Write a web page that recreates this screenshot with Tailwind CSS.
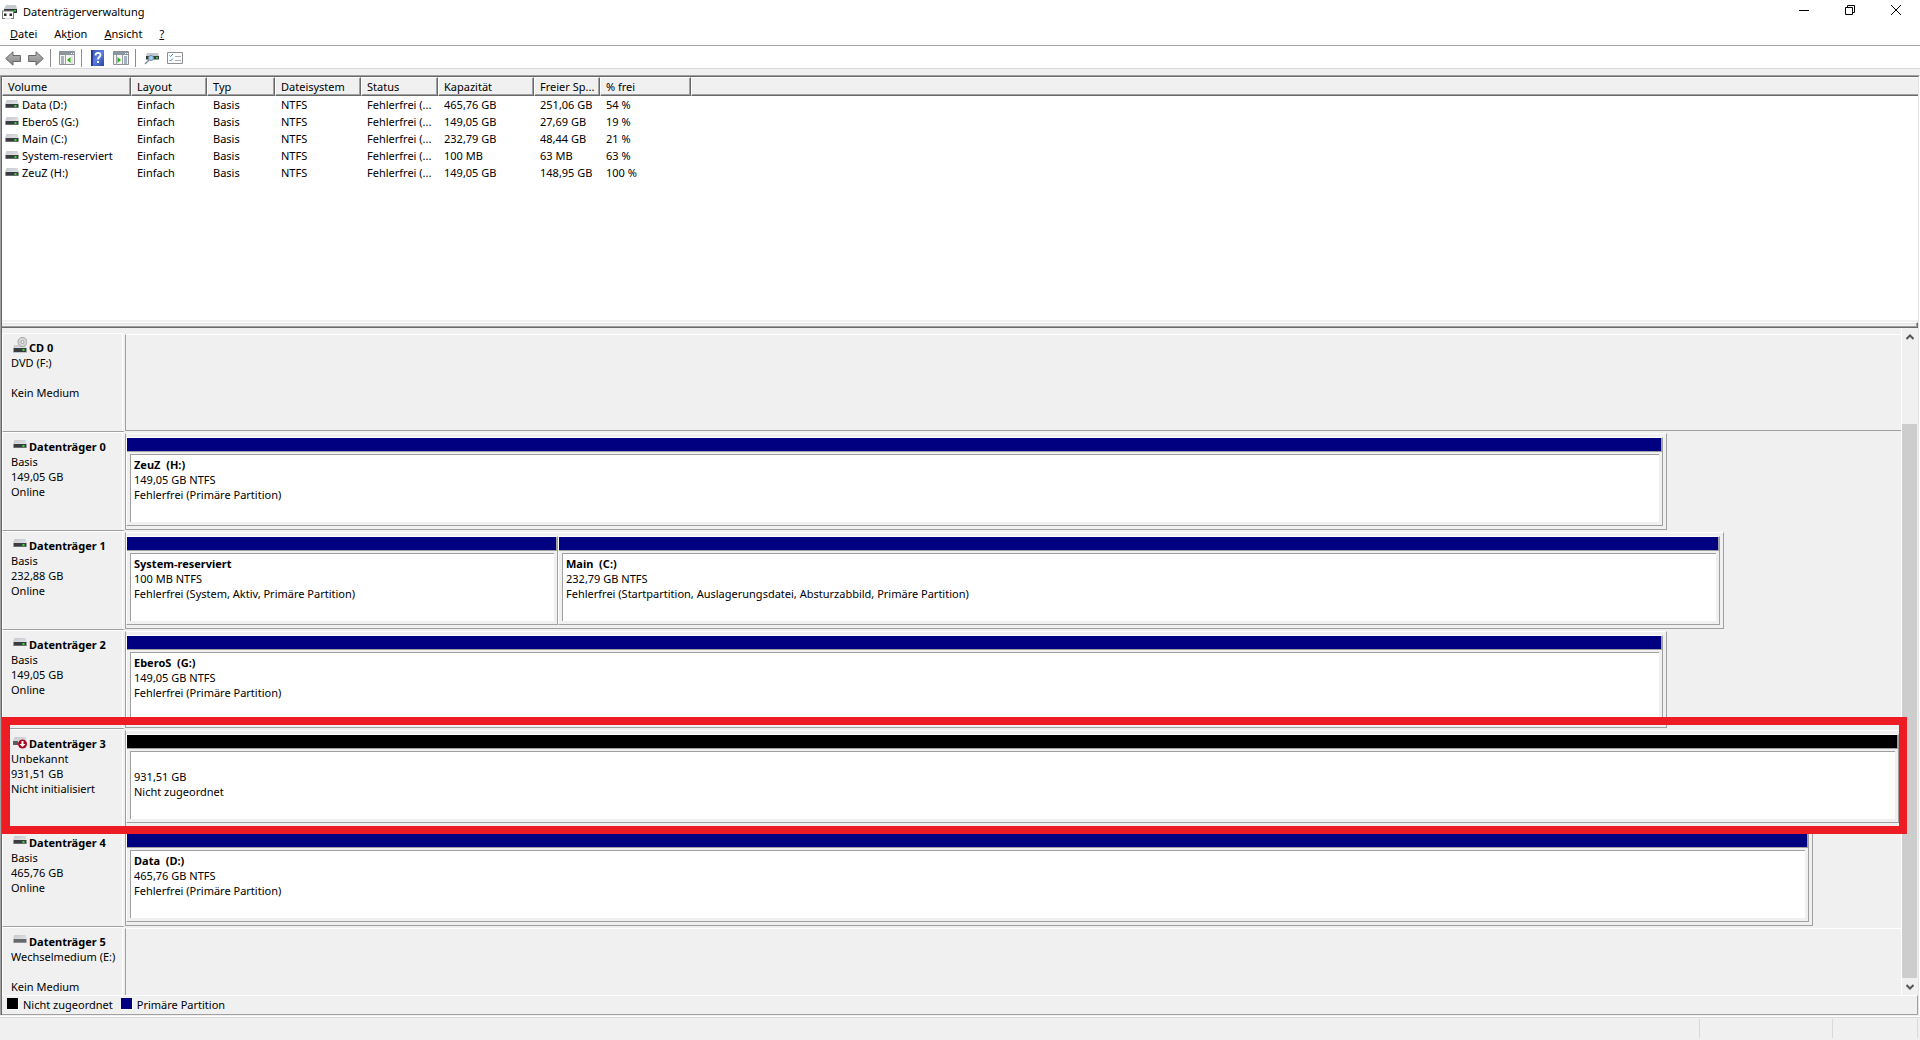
<!DOCTYPE html>
<html lang="de">
<head>
<meta charset="utf-8">
<title>Datenträgerverwaltung</title>
<script src="https://cdn.jsdelivr.net/npm/@tailwindcss/browser@4"></script>
</head>
<body class="flex h-screen flex-col overflow-hidden bg-[#f0f0f0] font-['Noto_Sans','Open_Sans',sans-serif] text-[11px] leading-[15px] text-black">

<svg class="absolute size-0" aria-hidden="true">
  <linearGradient id="lid" x1="0" y1="0" x2="1" y2="1"><stop offset="0" stop-color="#c3c6cb"/><stop offset="1" stop-color="#e2e4e7"/></linearGradient>
  <linearGradient id="arrow" x1="0" y1="0" x2="0" y2="1"><stop offset="0" stop-color="#b9b9b9"/><stop offset="1" stop-color="#858585"/></linearGradient>
  <linearGradient id="help" x1="0" y1="0" x2="1" y2="1"><stop offset="0" stop-color="#3555b5"/><stop offset=".5" stop-color="#5b7ee0"/><stop offset="1" stop-color="#2743a0"/></linearGradient>
  <symbol id="disk" viewBox="0 0 14 8"><path d="M1.500 0h11l1.500 4H0z" fill="url(#lid)"/><path d="M0 4h14v4H0z" fill="#9a9da0"/><path d="M1 4h12v3.500H1z" fill="#3a3d40"/><path d="M9.500 5h2v2h-2z" fill="#2ee02e"/></symbol>
  <symbol id="removable" viewBox="0 0 14 8"><path d="M1.500 0h11l1.500 4H0z" fill="url(#lid)"/><path d="M0 4h14v4H0z" fill="#b0b2b4"/><path d="M1 4h12v3.500H1z" fill="#66686b"/></symbol>
  <symbol id="cd" viewBox="0 0 14 16"><path d="M1.500 8h11l1.500 3H0z" fill="url(#lid)"/><path d="M0 11h14v4.500H0z" fill="#9a9da0"/><path d="M1 11h12v4H1z" fill="#3a3d40"/><path d="M9.500 12h2v2h-2z" fill="#2ee02e"/><circle cx="9.500" cy="5" r="4.500" fill="#d8d8d8" stroke="#a2a2a2"/><circle cx="9.500" cy="5" r="1.500" fill="#fff" stroke="#9a9a9a"/></symbol>
  <symbol id="offline" viewBox="0 0 14 13"><path d="M1.500 1h11l1.500 4H0z" fill="url(#lid)"/><path d="M0 5h5v4H0z" fill="#5a5d60"/><circle cx="9.500" cy="8" r="4.500" fill="#a8081c"/><path d="M8.500 5h2v3h2l-3 3-3-3h2z" fill="#fff"/></symbol>
</svg>

<header class="shrink-0 bg-white">
  <div class="flex h-[23px] items-start justify-between">
    <h1 class="flex h-[23px] items-center gap-1.5 pl-0.5">
      <svg width="15" height="14" viewBox="0 0 15 14" aria-hidden="true"><path d="M4 0h10l1 4H2z" fill="#c5c8cc"/><path d="M2 4h13v4H2z" fill="#303336"/><path d="M12 5h2v1.500h-2z" fill="#2ee02e"/><path d="M0 5.500h12V14H0z" fill="#77797c"/><path d="M1 6.500h10V13H1z" fill="#fff"/><path d="M2 8.500h2.500V11H2zM7.500 8.500H10V11H7.500z" fill="#2c2c2c"/><path d="M3 13h6v1H3z" fill="#ddd"/></svg>
      Datenträgerverwaltung
    </h1>
    <div class="flex pr-px">
      <button aria-label="Minimieren" class="flex h-5 w-[46px] items-center justify-center"><svg width="10" height="10" viewBox="0 0 10 10"><path d="M0 5h10v1H0z"/></svg></button>
      <button aria-label="Verkleinern" class="flex h-5 w-[46px] items-center justify-center"><svg width="10" height="10" viewBox="0 0 10 10" fill="none" stroke="#000"><path d="M.5 2.500h7v7h-7zM2.500 2.500v-2h7v7h-2"/></svg></button>
      <button aria-label="Schließen" class="flex h-5 w-[46px] items-center justify-center"><svg width="10" height="10" viewBox="0 0 10 10" stroke="#000"><path d="M0 0l10 10M10 0L0 10"/></svg></button>
    </div>
  </div>
  <nav aria-label="Menü" class="flex h-[23px] items-center gap-[17px] border-b border-[#a5a6ad] pb-px pl-2.5">
    <button><u>D</u>atei</button>
    <button>Ak<u>t</u>ion</button>
    <button><u>A</u>nsicht</button>
    <button><u>?</u></button>
  </nav>
  <div role="toolbar" class="flex h-[23px] items-center border-b border-[#d9d9d9] pt-0.5 pl-[5px]">
    <button aria-label="Zurück"><svg width="16" height="15" viewBox="0 0 16 15"><path d="M.7 7.500L8 .8v3.700h7.400v6H8v3.700z" fill="url(#arrow)" stroke="#666"/></svg></button>
    <button aria-label="Vorwärts" class="ml-[7px]"><svg width="16" height="15" viewBox="0 0 16 15"><path d="M15.300 7.500L8 .8v3.700H.6v6H8v3.700z" fill="url(#arrow)" stroke="#666"/></svg></button>
    <span class="ml-1.5 h-[18px] w-px bg-[#8d8d8d]"></span>
    <button aria-label="Konsolenstruktur" class="ml-2"><svg width="16" height="14" viewBox="0 0 16 14"><path d="M.5.5h15v13H.5z" fill="#f4f4f2" stroke="#8c9096"/><path d="M1 1h14v3H1z" fill="#8c96a0"/><path d="M12 2h1v1h-1zM14 2h1v1h-1z" fill="#fff"/><path d="M2 6h3M2 8h3M2 10h3M2 12h3" stroke="#56708c"/><path d="M6.500 4v10" stroke="#9aa0a6"/><path d="M8 9l3.500-3v6z" fill="#2fae1e"/><path d="M13 5v8" stroke="#d0d0d0"/></svg></button>
    <span class="ml-1.5 h-[18px] w-px bg-[#8d8d8d]"></span>
    <button aria-label="Hilfe" class="ml-[9px]"><svg width="13" height="16" viewBox="0 0 13 16"><path d="M0 0h13v16H0z" fill="url(#help)"/><path d="M0 0h2v16H0z" fill="#233c93"/><path d="M4.500 5.500c0-3.500 5-3.500 5-.5 0 2-2.500 2-2.500 4.500" fill="none" stroke="#fff" stroke-width="1.800"/><path d="M6 11h2v2H6z" fill="#fff"/></svg></button>
    <button aria-label="Aktionsbereich" class="ml-[9px]"><svg width="16" height="14" viewBox="0 0 16 14"><path d="M.5.5h15v13H.5z" fill="#f4f4f2" stroke="#8c9096"/><path d="M1 1h14v3H1z" fill="#8c96a0"/><path d="M12 2h1v1h-1zM14 2h1v1h-1z" fill="#fff"/><path d="M11 6h3M11 8h3M11 10h3M11 12h3" stroke="#56708c"/><path d="M9.500 4v10M3.500 4v10" stroke="#9aa0a6"/><path d="M8 9L4.500 6v6z" fill="#2fae1e"/></svg></button>
    <span class="ml-1.5 h-[18px] w-px bg-[#8d8d8d]"></span>
    <button aria-label="Datenträger neu einlesen" class="ml-2"><svg width="15" height="14" viewBox="0 0 15 14"><path d="M3 2h11l1 3H2z" fill="#c5c8cc"/><path d="M2 5h13v3.500H2z" fill="#3a3d40"/><path d="M12 6h2v1.500h-2z" fill="#2ee02e"/><path d="M5 9l-4 4" stroke="#7a8a9a" stroke-width="1.500"/><circle cx="7" cy="7" r="2.500" fill="#a9cdea" stroke="#6a8fb0"/></svg></button>
    <button aria-label="Eigenschaften" class="ml-2"><svg width="16" height="12" viewBox="0 0 16 12"><path d="M.5.5h15v11H.5z" fill="#fff" stroke="#8c9096"/><path d="M2.500 3.500l1 1 2.500-2.500M2.500 8l1 1L6 6.500" fill="none" stroke="#2a8ad8"/><path d="M8 4.500h6M8 8.500h6" stroke="#a8acb0"/></svg></button>
  </div>
</header>

<main class="mt-1.5 flex min-h-0 flex-1 flex-col border-t border-r border-l border-t-[#a0a0a0] border-r-white border-l-[#a0a0a0]">
 <div class="flex min-h-0 flex-1 flex-col border-t border-r border-l border-t-[#696969] border-r-[#e3e3e3] border-l-[#696969]">

  <section aria-label="Volumes" class="h-[243px] shrink-0 overflow-hidden bg-white">
    <table class="w-full table-fixed border-collapse text-left whitespace-nowrap">
      <colgroup><col class="w-[129px]"><col class="w-[76px]"><col class="w-[68px]"><col class="w-[86px]"><col class="w-[77px]"><col class="w-[96px]"><col class="w-[66px]"><col class="w-[91px]"><col></colgroup>
      <thead>
        <tr class="h-[19px]">
          <th class="p-0 font-normal"><div class="h-[19px] border-t border-r border-b border-l border-t-white border-r-[#696969] border-b-[#696969] border-l-white bg-[#f0f0f0] pt-px pl-[5px] shadow-[inset_-1px_-1px_0_#a0a0a0]">Volume</div></th>
          <th class="p-0 font-normal"><div class="h-[19px] border-t border-r border-b border-l border-t-white border-r-[#696969] border-b-[#696969] border-l-white bg-[#f0f0f0] pt-px pl-[5px] shadow-[inset_-1px_-1px_0_#a0a0a0]">Layout</div></th>
          <th class="p-0 font-normal"><div class="h-[19px] border-t border-r border-b border-l border-t-white border-r-[#696969] border-b-[#696969] border-l-white bg-[#f0f0f0] pt-px pl-[5px] shadow-[inset_-1px_-1px_0_#a0a0a0]">Typ</div></th>
          <th class="p-0 font-normal"><div class="h-[19px] border-t border-r border-b border-l border-t-white border-r-[#696969] border-b-[#696969] border-l-white bg-[#f0f0f0] pt-px pl-[5px] shadow-[inset_-1px_-1px_0_#a0a0a0]">Dateisystem</div></th>
          <th class="p-0 font-normal"><div class="h-[19px] border-t border-r border-b border-l border-t-white border-r-[#696969] border-b-[#696969] border-l-white bg-[#f0f0f0] pt-px pl-[5px] shadow-[inset_-1px_-1px_0_#a0a0a0]">Status</div></th>
          <th class="p-0 font-normal"><div class="h-[19px] border-t border-r border-b border-l border-t-white border-r-[#696969] border-b-[#696969] border-l-white bg-[#f0f0f0] pt-px pl-[5px] shadow-[inset_-1px_-1px_0_#a0a0a0]">Kapazität</div></th>
          <th class="p-0 font-normal"><div class="h-[19px] border-t border-r border-b border-l border-t-white border-r-[#696969] border-b-[#696969] border-l-white bg-[#f0f0f0] pt-px pl-[5px] shadow-[inset_-1px_-1px_0_#a0a0a0]">Freier Sp...</div></th>
          <th class="p-0 font-normal"><div class="h-[19px] border-t border-r border-b border-l border-t-white border-r-[#696969] border-b-[#696969] border-l-white bg-[#f0f0f0] pt-px pl-[5px] shadow-[inset_-1px_-1px_0_#a0a0a0]">% frei</div></th>
          <td class="p-0"><div class="h-[19px] border-t border-b border-l border-t-white border-b-[#696969] border-l-white bg-[#f0f0f0] shadow-[inset_0_-1px_0_#a0a0a0]"></div></td>
        </tr>
      </thead>
      <tbody>
        <tr class="h-[17px]"><td class="p-0"><div class="flex items-center gap-[3px] pl-[3px]"><svg class="-mt-0.5 h-2 w-3.5"><use href="#disk"/></svg>Data (D:)</div></td><td class="py-0 pl-1.5">Einfach</td><td class="py-0 pl-1.5">Basis</td><td class="py-0 pl-1.5">NTFS</td><td class="py-0 pl-1.5">Fehlerfrei (...</td><td class="py-0 pl-1.5">465,76 GB</td><td class="py-0 pl-1.5">251,06 GB</td><td class="py-0 pl-1.5">54 %</td><td></td></tr>
        <tr class="h-[17px]"><td class="p-0"><div class="flex items-center gap-[3px] pl-[3px]"><svg class="-mt-0.5 h-2 w-3.5"><use href="#disk"/></svg>EberoS (G:)</div></td><td class="py-0 pl-1.5">Einfach</td><td class="py-0 pl-1.5">Basis</td><td class="py-0 pl-1.5">NTFS</td><td class="py-0 pl-1.5">Fehlerfrei (...</td><td class="py-0 pl-1.5">149,05 GB</td><td class="py-0 pl-1.5">27,69 GB</td><td class="py-0 pl-1.5">19 %</td><td></td></tr>
        <tr class="h-[17px]"><td class="p-0"><div class="flex items-center gap-[3px] pl-[3px]"><svg class="-mt-0.5 h-2 w-3.5"><use href="#disk"/></svg>Main (C:)</div></td><td class="py-0 pl-1.5">Einfach</td><td class="py-0 pl-1.5">Basis</td><td class="py-0 pl-1.5">NTFS</td><td class="py-0 pl-1.5">Fehlerfrei (...</td><td class="py-0 pl-1.5">232,79 GB</td><td class="py-0 pl-1.5">48,44 GB</td><td class="py-0 pl-1.5">21 %</td><td></td></tr>
        <tr class="h-[17px]"><td class="p-0"><div class="flex items-center gap-[3px] pl-[3px]"><svg class="-mt-0.5 h-2 w-3.5"><use href="#disk"/></svg>System-reserviert</div></td><td class="py-0 pl-1.5">Einfach</td><td class="py-0 pl-1.5">Basis</td><td class="py-0 pl-1.5">NTFS</td><td class="py-0 pl-1.5">Fehlerfrei (...</td><td class="py-0 pl-1.5">100 MB</td><td class="py-0 pl-1.5">63 MB</td><td class="py-0 pl-1.5">63 %</td><td></td></tr>
        <tr class="h-[17px]"><td class="p-0"><div class="flex items-center gap-[3px] pl-[3px]"><svg class="-mt-0.5 h-2 w-3.5"><use href="#disk"/></svg>ZeuZ (H:)</div></td><td class="py-0 pl-1.5">Einfach</td><td class="py-0 pl-1.5">Basis</td><td class="py-0 pl-1.5">NTFS</td><td class="py-0 pl-1.5">Fehlerfrei (...</td><td class="py-0 pl-1.5">149,05 GB</td><td class="py-0 pl-1.5">148,95 GB</td><td class="py-0 pl-1.5">100 %</td><td></td></tr>
      </tbody>
    </table>
  </section>

  <div class="h-2 shrink-0 pt-0.5"><div class="h-1.5 border-t border-r border-b border-t-white border-r-[#696969] border-b-[#696969] shadow-[inset_-1px_-1px_0_#a0a0a0,inset_0_1px_0_#e3e3e3]"></div></div>

  <section aria-label="Datenträger" class="flex min-h-0 flex-1 overflow-hidden">
    <div class="flex min-w-0 flex-1 flex-col border-r border-white pt-[5px]">

      <div class="flex h-[99px] shrink-0">
        <div class="w-[123px] shrink-0 overflow-hidden border-t border-r-2 border-b border-l border-t-white border-r-[#f0f0f0] border-b-[#a0a0a0] border-l-white pt-1.5 pr-1.5 pl-2 whitespace-nowrap shadow-[inset_-1px_0_0_#fff]">
          <h2 class="flex items-center gap-0.5 pl-0.5 font-bold"><svg class="-mt-[5px] h-4 w-3.5"><use href="#cd"/></svg>CD 0</h2>
          <p>DVD (F:)</p><p class="mt-[15px]">Kein Medium</p>
        </div>
        <div class="my-px flex-1 border-t border-b border-l border-t-white border-b-[#a0a0a0] border-l-[#a0a0a0]"></div>
      </div>

      <div class="flex h-[99px] shrink-0">
        <div class="w-[123px] shrink-0 overflow-hidden border-t border-r-2 border-b border-l border-t-white border-r-[#f0f0f0] border-b-[#a0a0a0] border-l-white pt-1.5 pr-1.5 pl-2 whitespace-nowrap shadow-[inset_-1px_0_0_#fff]">
          <h2 class="flex items-center gap-0.5 pl-0.5 font-bold"><svg class="-mt-[5px] h-2 w-3.5"><use href="#disk"/></svg>Datenträger 0</h2>
          <p>Basis</p><p>149,05 GB</p><p>Online</p>
        </div>
        <div class="my-px flex min-w-0 flex-1">
          <div class="flex min-w-0 flex-[1537] border-t border-r border-b border-l border-t-white border-r-[#a0a0a0] border-b-[#a0a0a0] border-l-[#a0a0a0] py-[3px] pr-[3px]">
            <div class="flex min-w-0 flex-1 flex-col border-t border-r border-b border-l border-t-white border-r-[#a0a0a0] border-b-[#a0a0a0] border-l-white">
              <div class="h-3.5 border-r border-b border-[#a0a0a0] bg-[#000080]"></div>
              <div class="mt-0.5 mr-[3px] mb-[3px] ml-[3px] flex-1 border-t border-l border-[#a0a0a0] bg-white pt-0.5 pl-[3px] whitespace-nowrap"><h3 class="font-bold">ZeuZ&nbsp; (H:)</h3><p>149,05 GB NTFS</p><p>Fehlerfrei (Primäre Partition)</p></div>
            </div>
          </div>
          <div class="flex-[234]"></div>
        </div>
      </div>

      <div class="flex h-[99px] shrink-0">
        <div class="w-[123px] shrink-0 overflow-hidden border-t border-r-2 border-b border-l border-t-white border-r-[#f0f0f0] border-b-[#a0a0a0] border-l-white pt-1.5 pr-1.5 pl-2 whitespace-nowrap shadow-[inset_-1px_0_0_#fff]">
          <h2 class="flex items-center gap-0.5 pl-0.5 font-bold"><svg class="-mt-[5px] h-2 w-3.5"><use href="#disk"/></svg>Datenträger 1</h2>
          <p>Basis</p><p>232,88 GB</p><p>Online</p>
        </div>
        <div class="my-px flex min-w-0 flex-1">
          <div class="flex min-w-0 flex-[1594] border-t border-r border-b border-l border-t-white border-r-[#a0a0a0] border-b-[#a0a0a0] border-l-[#a0a0a0] py-[3px] pr-[3px]">
            <div class="flex min-w-0 flex-[430] flex-col border-t border-r border-b border-l border-t-white border-r-[#a0a0a0] border-b-[#a0a0a0] border-l-white">
              <div class="h-3.5 border-r border-b border-[#a0a0a0] bg-[#000080]"></div>
              <div class="mt-0.5 mr-[3px] mb-[3px] ml-[3px] flex-1 border-t border-l border-[#a0a0a0] bg-white pt-0.5 pl-[3px] whitespace-nowrap"><h3 class="font-bold">System-reserviert</h3><p>100 MB NTFS</p><p>Fehlerfrei (System, Aktiv, Primäre Partition)</p></div>
            </div>
            <div class="flex min-w-0 flex-[1160] flex-col border-t border-r border-b border-l border-t-white border-r-[#a0a0a0] border-b-[#a0a0a0] border-l-white">
              <div class="h-3.5 border-r border-b border-[#a0a0a0] bg-[#000080]"></div>
              <div class="mt-0.5 mr-[3px] mb-[3px] ml-[3px] flex-1 border-t border-l border-[#a0a0a0] bg-white pt-0.5 pl-[3px] whitespace-nowrap"><h3 class="font-bold">Main&nbsp; (C:)</h3><p>232,79 GB NTFS</p><p>Fehlerfrei (Startpartition, Auslagerungsdatei, Absturzabbild, Primäre Partition)</p></div>
            </div>
          </div>
          <div class="flex-[177]"></div>
        </div>
      </div>

      <div class="flex h-[99px] shrink-0">
        <div class="w-[123px] shrink-0 overflow-hidden border-t border-r-2 border-b border-l border-t-white border-r-[#f0f0f0] border-b-[#a0a0a0] border-l-white pt-1.5 pr-1.5 pl-2 whitespace-nowrap shadow-[inset_-1px_0_0_#fff]">
          <h2 class="flex items-center gap-0.5 pl-0.5 font-bold"><svg class="-mt-[5px] h-2 w-3.5"><use href="#disk"/></svg>Datenträger 2</h2>
          <p>Basis</p><p>149,05 GB</p><p>Online</p>
        </div>
        <div class="my-px flex min-w-0 flex-1">
          <div class="flex min-w-0 flex-[1537] border-t border-r border-b border-l border-t-white border-r-[#a0a0a0] border-b-[#a0a0a0] border-l-[#a0a0a0] py-[3px] pr-[3px]">
            <div class="flex min-w-0 flex-1 flex-col border-t border-r border-b border-l border-t-white border-r-[#a0a0a0] border-b-[#a0a0a0] border-l-white">
              <div class="h-3.5 border-r border-b border-[#a0a0a0] bg-[#000080]"></div>
              <div class="mt-0.5 mr-[3px] mb-[3px] ml-[3px] flex-1 border-t border-l border-[#a0a0a0] bg-white pt-0.5 pl-[3px] whitespace-nowrap"><h3 class="font-bold">EberoS&nbsp; (G:)</h3><p>149,05 GB NTFS</p><p>Fehlerfrei (Primäre Partition)</p></div>
            </div>
          </div>
          <div class="flex-[234]"></div>
        </div>
      </div>

      <div class="relative z-10 flex h-[99px] shrink-0">
        <div class="w-[123px] shrink-0 overflow-hidden border-t border-r-2 border-b border-l border-t-white border-r-[#f0f0f0] border-b-[#a0a0a0] border-l-white pt-1.5 pr-1.5 pl-2 whitespace-nowrap shadow-[inset_-1px_0_0_#fff]">
          <h2 class="flex items-center gap-0.5 pl-0.5 font-bold"><svg class="-mt-0.5 h-[13px] w-3.5"><use href="#offline"/></svg>Datenträger 3</h2>
          <p>Unbekannt</p><p>931,51 GB</p><p>Nicht initialisiert</p>
        </div>
        <div class="my-px flex min-w-0 flex-1">
          <div class="flex min-w-0 flex-1 border-t border-b border-l border-t-white border-b-[#a0a0a0] border-l-[#a0a0a0] py-[3px] pr-0.5">
            <div class="flex min-w-0 flex-1 flex-col border-t border-r border-b border-l border-t-white border-r-[#a0a0a0] border-b-[#a0a0a0] border-l-white">
              <div class="h-3.5 border-r border-b border-[#a0a0a0] bg-black"></div>
              <div class="mt-0.5 mr-[3px] mb-[3px] ml-[3px] flex-1 border-t border-l border-[#a0a0a0] bg-white pt-[17px] pl-[3px] whitespace-nowrap"><p>931,51 GB</p><p>Nicht zugeordnet</p></div>
            </div>
          </div>
        </div>
        <div class="pointer-events-none absolute -top-3 -right-1.5 -bottom-1.5 left-0 border-8 border-[#ed1c24]"></div>
      </div>

      <div class="flex h-[99px] shrink-0">
        <div class="w-[123px] shrink-0 overflow-hidden border-t border-r-2 border-b border-l border-t-white border-r-[#f0f0f0] border-b-[#a0a0a0] border-l-white pt-1.5 pr-1.5 pl-2 whitespace-nowrap shadow-[inset_-1px_0_0_#fff]">
          <h2 class="flex items-center gap-0.5 pl-0.5 font-bold"><svg class="-mt-[5px] h-2 w-3.5"><use href="#disk"/></svg>Datenträger 4</h2>
          <p>Basis</p><p>465,76 GB</p><p>Online</p>
        </div>
        <div class="my-px flex min-w-0 flex-1">
          <div class="flex min-w-0 flex-[1683] border-t border-r border-b border-l border-t-white border-r-[#a0a0a0] border-b-[#a0a0a0] border-l-[#a0a0a0] py-[3px] pr-[3px]">
            <div class="flex min-w-0 flex-1 flex-col border-t border-r border-b border-l border-t-white border-r-[#a0a0a0] border-b-[#a0a0a0] border-l-white">
              <div class="h-3.5 border-r border-b border-[#a0a0a0] bg-[#000080]"></div>
              <div class="mt-0.5 mr-[3px] mb-[3px] ml-[3px] flex-1 border-t border-l border-[#a0a0a0] bg-white pt-0.5 pl-[3px] whitespace-nowrap"><h3 class="font-bold">Data&nbsp; (D:)</h3><p>465,76 GB NTFS</p><p>Fehlerfrei (Primäre Partition)</p></div>
            </div>
          </div>
          <div class="flex-[88]"></div>
        </div>
      </div>

      <div class="flex h-[99px] shrink-0">
        <div class="w-[123px] shrink-0 overflow-hidden border-t border-r-2 border-b border-l border-t-white border-r-[#f0f0f0] border-b-[#a0a0a0] border-l-white pt-1.5 pr-1.5 pl-2 whitespace-nowrap shadow-[inset_-1px_0_0_#fff]">
          <h2 class="flex items-center gap-0.5 pl-0.5 font-bold"><svg class="-mt-[5px] h-2 w-3.5"><use href="#removable"/></svg>Datenträger 5</h2>
          <p class="overflow-hidden">Wechselmedium (E:)</p><p class="mt-[15px]">Kein Medium</p>
        </div>
        <div class="my-px flex-1 border-t border-b border-l border-t-white border-b-[#a0a0a0] border-l-[#a0a0a0]"></div>
      </div>
    </div>

    <div class="flex w-4 shrink-0 flex-col pr-px">
      <button aria-label="Nach oben" class="flex h-[17px] shrink-0 items-center justify-center"><svg width="8" height="6" viewBox="0 0 8 6" fill="none" stroke="#555" stroke-width="2"><path d="M.5 5L4 1.500 7.500 5"/></svg></button>
      <div class="flex-[79]"></div>
      <div class="flex-[554] bg-[#cdcdcd]"></div>
      <button aria-label="Nach unten" class="flex h-[17px] shrink-0 items-center justify-center"><svg width="8" height="6" viewBox="0 0 8 6" fill="none" stroke="#555" stroke-width="2"><path d="M.5 1L4 4.500 7.500 1"/></svg></button>
    </div>
  </section>

  <div class="flex h-5 shrink-0 items-center border-t border-r border-b border-t-white border-r-[#a0a0a0] border-b-[#a0a0a0] pb-0.5 pl-[5px]">
    <span class="size-3 border-r border-b border-white bg-black"></span><span class="ml-1">Nicht zugeordnet</span>
    <span class="ml-2 size-3 border-r border-b border-white bg-[#000080]"></span><span class="ml-1">Primäre Partition</span>
  </div>
 </div>
</main>

<footer class="mt-px flex h-6 shrink-0 border-t border-white">
  <div class="flex flex-1 border-t border-[#d9d9d9] pt-px pr-0.5 pb-0.5">
    <div class="flex-1 border-r border-[#d9d9d9]"></div>
    <div class="w-[133px] border-r border-[#d9d9d9]"></div>
    <div class="w-[85px] border-r border-[#d9d9d9]"></div>
  </div>
</footer>
</body>
</html>
